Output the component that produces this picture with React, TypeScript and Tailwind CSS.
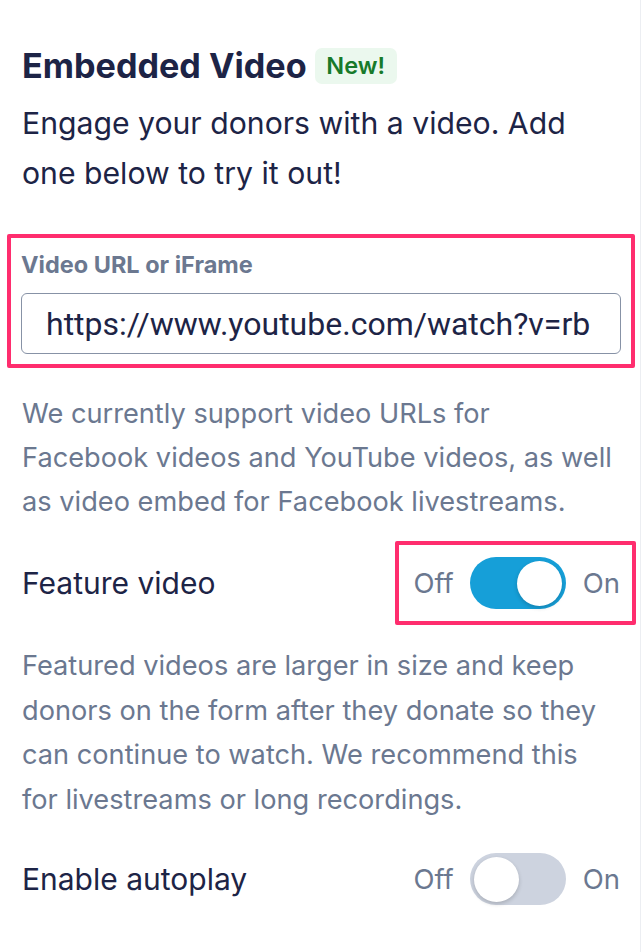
import React from "react";

function Toggle({ on, boxed }: { on: boolean; boxed?: boolean }) {
  return (
    <div
      className={
        "flex items-center -mr-[16px] pl-[14px] pr-[12px] py-[12px] border-4 " +
        (boxed ? "border-[#ff2d6e] rounded-[2px]" : "border-transparent")
      }
    >
      <span className="text-[27.5px] leading-[52px] text-[#6b7890]">Off</span>
      <div
        className={
          "ml-[16px] w-[96px] h-[52px] rounded-full flex items-center px-[4px] " +
          (on ? "bg-[#169fd8] justify-end" : "bg-[#cdd3df] justify-start")
        }
      >
        <div className="w-[45px] h-[45px] rounded-full bg-white shadow-[0_2px_4px_rgba(0,0,0,0.18)]" />
      </div>
      <span className="ml-[17px] text-[27.5px] leading-[52px] text-[#6b7890]">On</span>
    </div>
  );
}

export default function App() {
  return (
    <div
      className="w-[642px] h-[952px] bg-white"
      style={{ fontFamily: "Inter, 'Noto Sans', sans-serif" }}
    >
      <div className="w-[641px] h-full border-r border-[#eceef2] pl-[22px] pr-[20px] pt-[45px]">
        <div className="flex items-center">
          <h1 className="text-[34.2px] leading-[42px] font-bold text-[#1d2446]">
            Embedded Video
          </h1>
          <span className="ml-[8px] h-[36px] w-[82px] flex items-center justify-center rounded-[7px] bg-[#ebf8ee] text-[#177a2a] text-[23.5px] font-semibold">
            New!
          </span>
        </div>
        <p className="mt-[11px] max-w-[590px] text-[30.2px] leading-[50px] text-[#1d2446]">
          Engage your donors with a video. Add one below to try it out!
        </p>

        <div className="mt-[36px] -mx-[15px] border-4 border-[#ff2d6e] rounded-[2px] px-[10px] pt-[12px] pb-[10px]">
          <label className="block text-[23.5px] leading-[30px] font-bold text-[#6b7890]">
            Video URL or iFrame
          </label>
          <div className="mt-[13px] h-[61px] border border-[#8792a6] rounded-[6px] flex items-center pl-[24px] overflow-hidden">
            <span
              className="whitespace-nowrap text-[32px] text-[#1d2446]"
              style={{ fontFamily: "Roboto, 'Liberation Sans', sans-serif" }}
            >
              https://www.youtube.com/watch?v=rb
            </span>
          </div>
        </div>

        <p className="mt-[24px] text-[27.2px] leading-[44px] text-[#6b7890]">
          We currently support video URLs for Facebook videos and YouTube videos, as well as video embed for Facebook livestreams.
        </p>

        <div className="mt-[17px] flex items-center justify-between">
          <span className="text-[30px] text-[#1d2446]">Feature video</span>
          <Toggle on boxed />
        </div>

        <p className="mt-[19px] text-[27.2px] leading-[44.5px] text-[#6b7890]">
          Featured videos are larger in size and keep donors on the form after they donate so they can continue to watch. We recommend this for livestreams or long recordings.
        </p>

        <div className="mt-[15px] flex items-center justify-between">
          <span className="text-[30px] text-[#1d2446]">Enable autoplay</span>
          <Toggle on={false} />
        </div>
      </div>
    </div>
  );
}
